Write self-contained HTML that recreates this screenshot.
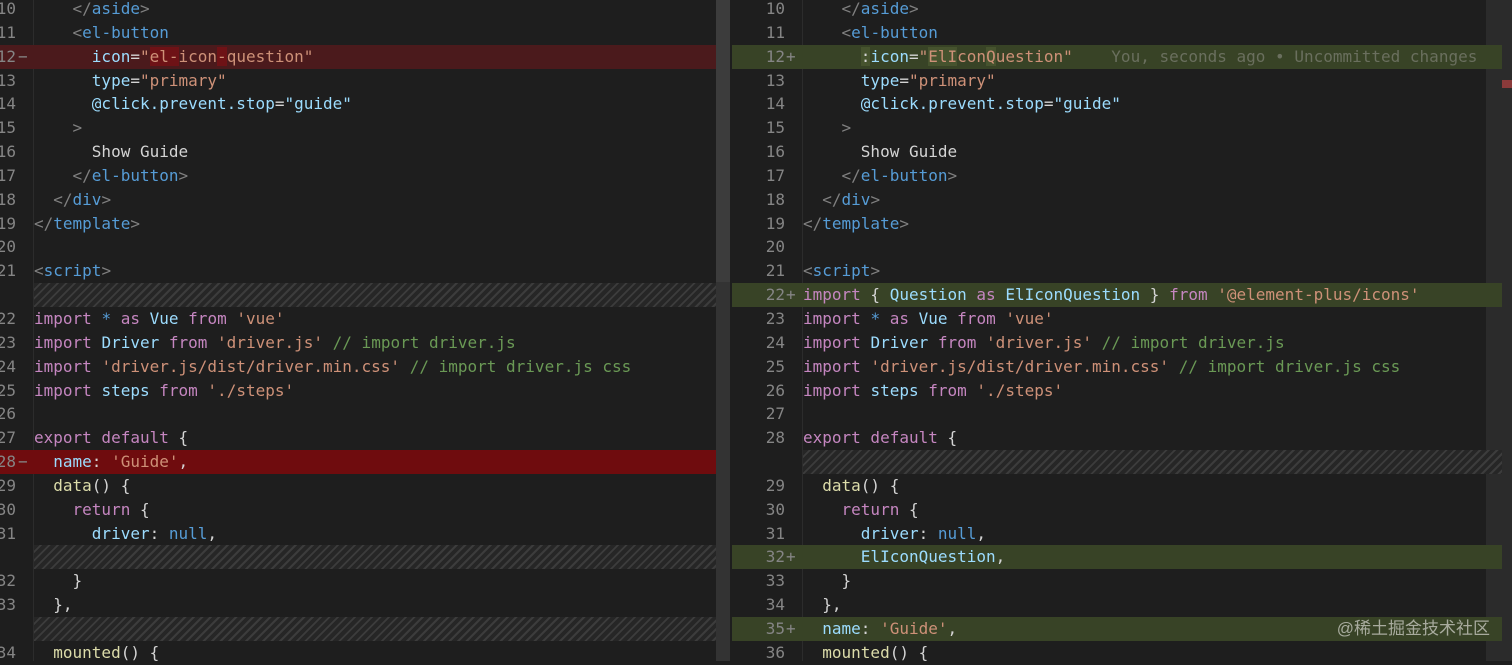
<!DOCTYPE html>
<html><head><meta charset="utf-8"><style>
body{margin:0;width:1512px;height:661px;overflow:hidden;background:#1e1e1e;font-family:"DejaVu Sans Mono","Liberation Mono",monospace;font-size:16px;position:relative}
.pane{position:absolute;top:-3px}
.row{height:23.85px;line-height:23.85px;position:relative;white-space:pre;color:#d4d4d4}
.ln{position:absolute;text-align:right;color:#858585}
.mk{position:absolute;color:#858585}
.code{position:absolute}
.hatch{background:repeating-linear-gradient(135deg,#262626 0 4px,#3c3c3c 4px 6px)}
.del{background:#4b1a1c}.del2{background:#6f0c0e}
.add{background:#384326}
.hl-r{background:#6e1216}.hl-g{background:#46532e}
.t{color:#808080}.n{color:#569cd6}.a{color:#9cdcfe}.s{color:#ce9178}.k{color:#c586c0}.c{color:#6a9955}.f{color:#dcdcaa}
#L{left:0;width:716px}#L .ln{left:-20px;width:36px}#L .mk{left:18px}#L .code{left:34px}
#R{left:732px;width:770px}#R .ln{left:0;width:53px}#R .mk{left:54px}#R .code{left:71px}
</style></head><body>
<div style="position:absolute;left:716px;top:0;width:14px;height:661px;background:#333"></div>
<div style="position:absolute;left:716px;top:0;width:14px;height:282px;background:#3c3c3c"></div>
<div style="position:absolute;left:33px;top:0;width:1px;height:661px;background:#2c2c2c"></div>
<div style="position:absolute;left:802px;top:0;width:1px;height:661px;background:#2c2c2c"></div>
<div style="position:absolute;left:1486px;top:0;width:26px;height:661px;background:#2b2b2b"></div>
<div style="position:absolute;left:1502px;top:80px;width:10px;height:8px;background:#8a3a3a"></div>
<div class="pane" id="L">
<div class="row"><span class="ln">10</span><span class="code">    <span class="t">&lt;/</span><span class="n">aside</span><span class="t">&gt;</span></span></div>
<div class="row"><span class="ln">11</span><span class="code">    <span class="t">&lt;</span><span class="n">el-button</span></span></div>
<div class="row del"><span class="ln">12</span><span class="mk">−</span><span class="code">      <span class="a">icon</span>=<span class="s">"<span class="hl-r">el-</span>icon<span class="hl-r">-</span>question"</span></span></div>
<div class="row"><span class="ln">13</span><span class="code">      <span class="a">type</span>=<span class="s">"primary"</span></span></div>
<div class="row"><span class="ln">14</span><span class="code">      <span class="a">@click.prevent.stop</span>=<span class="s" style="color:#9cdcfe">"guide"</span></span></div>
<div class="row"><span class="ln">15</span><span class="code">    <span class="t">&gt;</span></span></div>
<div class="row"><span class="ln">16</span><span class="code">      Show Guide</span></div>
<div class="row"><span class="ln">17</span><span class="code">    <span class="t">&lt;/</span><span class="n">el-button</span><span class="t">&gt;</span></span></div>
<div class="row"><span class="ln">18</span><span class="code">  <span class="t">&lt;/</span><span class="n">div</span><span class="t">&gt;</span></span></div>
<div class="row"><span class="ln">19</span><span class="code"><span class="t">&lt;/</span><span class="n">template</span><span class="t">&gt;</span></span></div>
<div class="row"><span class="ln">20</span></div>
<div class="row"><span class="ln">21</span><span class="code"><span class="t">&lt;</span><span class="n">script</span><span class="t">&gt;</span></span></div>
<div class="row hatch" style="margin-left:34px"></div>
<div class="row"><span class="ln">22</span><span class="code"><span class="k">import</span> <span class="n">*</span> <span class="k">as</span> <span class="a">Vue</span> <span class="k">from</span> <span class="s">'vue'</span></span></div>
<div class="row"><span class="ln">23</span><span class="code"><span class="k">import</span> <span class="a">Driver</span> <span class="k">from</span> <span class="s">'driver.js'</span> <span class="c">// import driver.js</span></span></div>
<div class="row"><span class="ln">24</span><span class="code"><span class="k">import</span> <span class="s">'driver.js/dist/driver.min.css'</span> <span class="c">// import driver.js css</span></span></div>
<div class="row"><span class="ln">25</span><span class="code"><span class="k">import</span> <span class="a">steps</span> <span class="k">from</span> <span class="s">'./steps'</span></span></div>
<div class="row"><span class="ln">26</span></div>
<div class="row"><span class="ln">27</span><span class="code"><span class="k">export default</span> {</span></div>
<div class="row del2"><span class="ln">28</span><span class="mk">−</span><span class="code">  <span class="a">name</span>: <span class="s">'Guide'</span>,</span></div>
<div class="row"><span class="ln">29</span><span class="code">  <span class="f">data</span>() {</span></div>
<div class="row"><span class="ln">30</span><span class="code">    <span class="k">return</span> {</span></div>
<div class="row"><span class="ln">31</span><span class="code">      <span class="a">driver</span>: <span class="n">null</span>,</span></div>
<div class="row hatch" style="margin-left:34px"></div>
<div class="row"><span class="ln">32</span><span class="code">    }</span></div>
<div class="row"><span class="ln">33</span><span class="code">  },</span></div>
<div class="row hatch" style="margin-left:34px"></div>
<div class="row"><span class="ln">34</span><span class="code">  <span class="f">mounted</span>() {</span></div>
</div>
<div class="pane" id="R">
<div class="row"><span class="ln">10</span><span class="code">    <span class="t">&lt;/</span><span class="n">aside</span><span class="t">&gt;</span></span></div>
<div class="row"><span class="ln">11</span><span class="code">    <span class="t">&lt;</span><span class="n">el-button</span></span></div>
<div class="row add"><span class="ln">12</span><span class="mk">+</span><span class="code">      <span class="hl-g">:</span><span class="a">icon</span>=<span class="s">"<span class="hl-g">ElI</span>con<span class="hl-g">Q</span>uestion"</span>    <span style="color:#6a6f5e">You, seconds ago • Uncommitted changes</span></span></div>
<div class="row"><span class="ln">13</span><span class="code">      <span class="a">type</span>=<span class="s">"primary"</span></span></div>
<div class="row"><span class="ln">14</span><span class="code">      <span class="a">@click.prevent.stop</span>=<span class="s" style="color:#9cdcfe">"guide"</span></span></div>
<div class="row"><span class="ln">15</span><span class="code">    <span class="t">&gt;</span></span></div>
<div class="row"><span class="ln">16</span><span class="code">      Show Guide</span></div>
<div class="row"><span class="ln">17</span><span class="code">    <span class="t">&lt;/</span><span class="n">el-button</span><span class="t">&gt;</span></span></div>
<div class="row"><span class="ln">18</span><span class="code">  <span class="t">&lt;/</span><span class="n">div</span><span class="t">&gt;</span></span></div>
<div class="row"><span class="ln">19</span><span class="code"><span class="t">&lt;/</span><span class="n">template</span><span class="t">&gt;</span></span></div>
<div class="row"><span class="ln">20</span></div>
<div class="row"><span class="ln">21</span><span class="code"><span class="t">&lt;</span><span class="n">script</span><span class="t">&gt;</span></span></div>
<div class="row add"><span class="ln">22</span><span class="mk">+</span><span class="code"><span class="k">import</span> { <span class="a">Question</span> <span class="k">as</span> <span class="a">ElIconQuestion</span> } <span class="k">from</span> <span class="s">'@element-plus/icons'</span></span></div>
<div class="row"><span class="ln">23</span><span class="code"><span class="k">import</span> <span class="n">*</span> <span class="k">as</span> <span class="a">Vue</span> <span class="k">from</span> <span class="s">'vue'</span></span></div>
<div class="row"><span class="ln">24</span><span class="code"><span class="k">import</span> <span class="a">Driver</span> <span class="k">from</span> <span class="s">'driver.js'</span> <span class="c">// import driver.js</span></span></div>
<div class="row"><span class="ln">25</span><span class="code"><span class="k">import</span> <span class="s">'driver.js/dist/driver.min.css'</span> <span class="c">// import driver.js css</span></span></div>
<div class="row"><span class="ln">26</span><span class="code"><span class="k">import</span> <span class="a">steps</span> <span class="k">from</span> <span class="s">'./steps'</span></span></div>
<div class="row"><span class="ln">27</span></div>
<div class="row"><span class="ln">28</span><span class="code"><span class="k">export default</span> {</span></div>
<div class="row hatch" style="margin-left:71px"></div>
<div class="row"><span class="ln">29</span><span class="code">  <span class="f">data</span>() {</span></div>
<div class="row"><span class="ln">30</span><span class="code">    <span class="k">return</span> {</span></div>
<div class="row"><span class="ln">31</span><span class="code">      <span class="a">driver</span>: <span class="n">null</span>,</span></div>
<div class="row add"><span class="ln">32</span><span class="mk">+</span><span class="code">      <span class="a">ElIconQuestion</span>,</span></div>
<div class="row"><span class="ln">33</span><span class="code">    }</span></div>
<div class="row"><span class="ln">34</span><span class="code">  },</span></div>
<div class="row add"><span class="ln">35</span><span class="mk">+</span><span class="code">  <span class="a">name</span>: <span class="s">'Guide'</span>,</span><span style="position:absolute;right:12px;color:#a8ab9e;font-family:'Liberation Sans','Noto Sans CJK SC',sans-serif;font-size:17px">@稀土掘金技术社区</span></div>
<div class="row"><span class="ln">36</span><span class="code">  <span class="f">mounted</span>() {</span></div>
</div>
</body></html>
